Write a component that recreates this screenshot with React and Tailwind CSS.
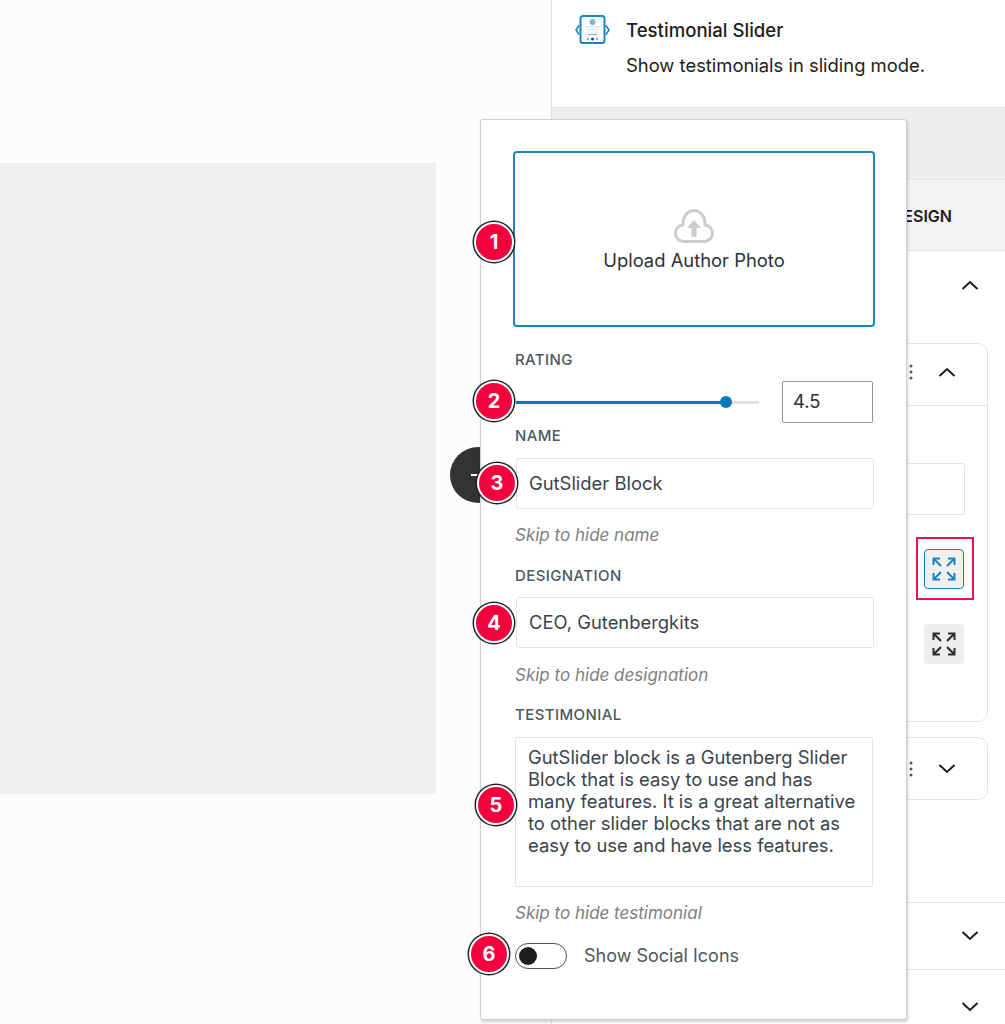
const F = { fontFamily: '"Inter", "Liberation Sans", sans-serif' };

function Chevron({ up, className }) {
  return (
    <svg width="18" height="10" viewBox="0 0 18 10" fill="none" stroke="#1e1e1e" strokeWidth="2" className={className}>
      <polyline points={up ? "1.5,9 9,2 16.5,9" : "1.5,1 9,8 16.5,1"} />
    </svg>
  );
}

function Dots() {
  return (
    <svg width="4" height="16" viewBox="0 0 4 16" fill="#50575e">
      <circle cx="2" cy="2" r="1.5" /><circle cx="2" cy="8" r="1.5" /><circle cx="2" cy="14" r="1.5" />
    </svg>
  );
}

function Expand({ color }) {
  return (
    <svg width="24" height="24" viewBox="0 0 24 24" fill="none" stroke={color} strokeWidth="2">
      <path d="M1.5 8V1.5H8M1.5 1.5L9 9" />
      <path d="M22.5 8V1.5H16M22.5 1.5L15 9" />
      <path d="M1.5 16V22.5H8M1.5 22.5L9 15" />
      <path d="M22.5 16V22.5H16M22.5 22.5L15 15" />
    </svg>
  );
}

function BlockIcon() {
  return (
    <svg width="35" height="30" viewBox="0 0 35 30" fill="none">
      <rect x="5.5" y="1" width="24" height="27" rx="2.5" stroke="#1a83c1" strokeWidth="2" fill="#fff" />
      <path d="M4 10.5L1 15L4 19.5M31 10.5L34 15L31 19.5" stroke="#1a83c1" strokeWidth="1.5" />
      <circle cx="17.5" cy="7" r="3" fill="#7fb5d6" />
      <path d="M10 12H25M11 14.5H24M12 17H23" stroke="#cfe2ee" strokeWidth="1" />
      <path d="M13 19.5H22" stroke="#7fb5d6" strokeWidth="1.2" />
      <circle cx="13" cy="24" r="1.4" fill="#8fbdd9" />
      <circle cx="17.5" cy="24" r="1.5" fill="#1d4f73" />
      <circle cx="22" cy="24" r="1.4" fill="#8fbdd9" />
    </svg>
  );
}

function CloudIcon() {
  return (
    <svg width="40" height="34" viewBox="0 0 40 34" fill="none">
      <path
        d="M10 32.5H30C35 32.5 38.5 29 38.5 24.5C38.5 20 35.5 16.5 31 16C31.5 8 26.5 1.5 20 1.5C13.5 1.5 8.5 8 9 16C4.5 16.5 1.5 20 1.5 24.5C1.5 29 5 32.5 10 32.5Z"
        stroke="#cccccc"
        strokeWidth="3"
      />
      <path d="M20 11L27 19H22.5V28H17.5V19H13Z" fill="#cccccc" />
    </svg>
  );
}

function Badge({ n, className }) {
  return (
    <div
      className={
        "absolute w-10 h-10 rounded-full bg-[#f5003f] border-2 border-white ring-[1.5px] ring-[#222] flex items-center justify-center text-white text-[20px] font-bold " +
        className
      }
    >
      {n}
    </div>
  );
}

function Label({ children, className }) {
  return <div className={"ml-[2px] text-[15px] leading-5 font-medium tracking-[0.4px] text-[#50575e] " + className}>{children}</div>;
}

function Hint({ children, className }) {
  return <div className={"ml-[2px] text-[17px] leading-5 italic text-[#808080] " + className}>{children}</div>;
}

function Field({ children, className }) {
  return (
    <div className={"ml-[3px] w-[358px] h-[51px] border border-[#e4e4e4] rounded-[3px] bg-white flex items-center pl-[12px] pt-[1px] text-[18.4px] text-[#3c434a] " + className}>
      {children}
    </div>
  );
}

function Popover() {
  return (
    <div className="absolute left-[480px] top-[119px] w-[427px] h-[901px] bg-white border border-[#cfcfcf] rounded-[3px] shadow-[1px_2px_3px_rgba(0,0,0,0.18)] pl-[32px] pt-[31px]">
      <div className="w-[362px] h-[176px] border-2 border-[#1a83c1] rounded-[4px] flex flex-col items-center pt-[56px]">
        <CloudIcon />
        <div className="mt-[5px] text-[18.4px] leading-[24px] text-[#2c3338]">Upload Author Photo</div>
      </div>

      <Label className="mt-[23px]">RATING</Label>
      <div className="mt-[11px] flex items-center">
        <div className="ml-[3px] w-[205px] h-[3px] bg-[#007cba]" />
        <div className="w-[12px] h-[12px] -ml-[1px] rounded-full bg-[#007cba]" />
        <div className="w-[27px] h-[3px] bg-[#e2e2e2]" />
        <div className="ml-[23px] w-[91px] h-[42px] border border-[#949494] rounded-[2px] flex items-center pl-[10px] text-[18.4px] text-[#2c3338]">4.5</div>
      </div>

      <Label className="mt-[3px]">NAME</Label>
      <Field className="mt-[12px]">GutSlider Block</Field>
      <Hint className="mt-[16px]">Skip to hide name</Hint>

      <Label className="mt-[21px]">DESIGNATION</Label>
      <Field className="mt-[11px]">CEO, Gutenbergkits</Field>
      <Hint className="mt-[17px]">Skip to hide designation</Hint>

      <Label className="mt-[20px]">TESTIMONIAL</Label>
      <div className="mt-[12px] ml-[2px] w-[358px] h-[150px] border border-[#e4e4e4] rounded-[2px] px-[12px] pt-[8px] text-[18.4px] leading-[22px] text-[#3c434a]">
        GutSlider block is a Gutenberg Slider Block that is easy to use and has many features. It is a great alternative to other slider blocks that are not as easy to use and have less features.
      </div>
      <Hint className="mt-[16px]">Skip to hide testimonial</Hint>

      <div className="mt-[19px] ml-[2px] flex items-center">
        <div className="w-[52px] h-[26px] border-[1.5px] border-[#555] rounded-full flex items-center pl-[3px]">
          <div className="w-[18px] h-[18px] rounded-full bg-[#1e1e1e]" />
        </div>
        <div className="ml-[17px] text-[18px] text-[#50575e]">Show Social Icons</div>
      </div>

      <Badge n="1" className="left-[-7px] top-[102px]" />
      <Badge n="2" className="left-[-7px] top-[261px]" />
      <Badge n="3" className="left-[-4px] top-[343px]" />
      <Badge n="4" className="left-[-7px] top-[483px]" />
      <Badge n="5" className="left-[-5px] top-[665px]" />
      <Badge n="6" className="left-[-12px] top-[814px]" />
    </div>
  );
}

function Sidebar() {
  return (
    <div className="w-[454px] h-[1024px] bg-white border-l border-[#dedede] flex flex-col">
      <div className="h-[108px] border-b border-[#e2e2e2] flex pl-[23px] pt-[15px]">
        <BlockIcon />
        <div className="ml-[16px]">
          <div className="text-[18.6px] leading-[30px] font-medium text-[#1e1e1e]">Testimonial Slider</div>
          <div className="mt-[5px] text-[18.4px] leading-[30px] text-[#1e1e1e]">Show testimonials in sliding mode.</div>
        </div>
      </div>
      <div className="h-[72px] bg-[#eeeeee] border-b border-[#e4e4e4]" />
      <div className="h-[71px] bg-[#f3f3f3] border-b border-[#e4e4e4] flex items-center justify-end pr-[53px] pt-[1px] text-[16px] font-semibold text-[#1e1e1e]">
        DESIGN
      </div>
      <div className="h-[92px] flex justify-end pr-[26px] pt-[29px]">
        <Chevron up />
      </div>
      <div className="ml-[15px] w-[421px] h-[379px] border border-[#e4e4e4] rounded-[10px] flex flex-col">
        <div className="h-[62px] shrink-0 border-b border-[#e4e4e4] flex items-center justify-end gap-[25px] pr-[31px] pb-[5px]">
          <Dots />
          <Chevron up />
        </div>
        <div className="flex flex-col items-end pr-[22px] pt-[57px]">
          <div className="w-[300px] h-[52px] border border-[#e4e4e4] rounded-[3px]" />
          <div className="mt-[34px] mr-[1px] w-[40px] h-[40px] bg-[#f0f0f0] border border-[#1a83c1] rounded-[4px] flex items-center justify-center">
            <Expand color="#1a83c1" />
          </div>
          <div className="mt-[35px] mr-[1px] w-[40px] h-[40px] bg-[#eeeeee] rounded-[4px] flex items-center justify-center">
            <Expand color="#2a2a2a" />
          </div>
        </div>
      </div>
      <div className="ml-[15px] mt-[15px] w-[421px] h-[63px] border border-[#e4e4e4] rounded-[10px] flex items-center justify-end gap-[25px] pr-[31px]">
        <Dots />
        <Chevron />
      </div>
      <div className="h-[103px] border-b border-[#e4e4e4]" />
      <div className="h-[67px] border-b border-[#e4e4e4] flex items-center justify-end pr-[26px]">
        <Chevron />
      </div>
      <div className="flex-1 flex justify-end pr-[26px] pt-[32px]">
        <Chevron />
      </div>
    </div>
  );
}

export default function App() {
  return (
    <div style={F} className="relative w-[1005px] h-[1024px] overflow-hidden flex bg-[#fbfcfe]">
      <div className="w-[551px] pt-[163px] shrink-0">
        <div className="w-[436px] h-[631px] bg-[#efefef]" />
      </div>
      <Sidebar />
      <div className="absolute left-[450px] top-[447px] w-[56px] h-[56px] rounded-full bg-[#333333] flex items-center justify-center">
        <div className="w-[14px] h-[1.5px] bg-white" />
      </div>
      <div className="absolute left-[916px] top-[537px] w-[58px] h-[63px] border-[2.5px] border-[#f5104f]" />
      <Popover />
    </div>
  );
}
